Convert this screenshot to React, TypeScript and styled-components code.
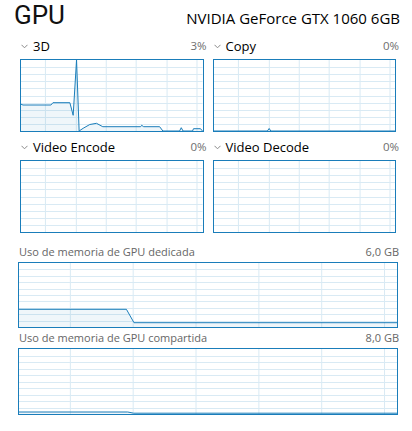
import React from "react";
import styled, { createGlobalStyle } from "styled-components";

const Global = createGlobalStyle`
  html, body { margin: 0; padding: 0; background: #ffffff; }
  body { font-family: "Open Sans", "Noto Sans", sans-serif; color: #000; }
`;

const BLUE = "#1a7dba";
const GRID = "#d9eaf4";
const FILL = "rgba(26,125,186,0.07)";

const Page = styled.div`
  width: 412px;
  height: 431px;
  box-sizing: border-box;
  display: flex;
  flex-direction: column;
  overflow: hidden;
`;

const Header = styled.div`
  display: flex;
  align-items: baseline;
  justify-content: space-between;
  padding: 0 12px 0 14px;
  height: 26px;
`;

const Title = styled.div`
  font-family: Roboto, "Open Sans", sans-serif;
  font-size: 26px;
  line-height: 30px;
  font-weight: 400;
  color: #111;
`;

const Device = styled.div`
  font-size: 15px;
  line-height: 26px;
`;

const SmallGrid = styled.div`
  display: grid;
  grid-template-columns: 1fr 1fr;
  column-gap: 6px;
  row-gap: 6px;
  padding: 0 13px 0 20px;
  margin-top: 11px;
`;

const Panel = styled.div`
  display: flex;
  flex-direction: column;
`;

const PanelHead = styled.div`
  display: flex;
  align-items: center;
  height: 18px;
  margin-bottom: 4px;
`;

const Chevron = styled.svg`
  width: 7px;
  height: 5px;
  margin: 0 5px 0 1px;
  flex: none;
`;

const PanelLabel = styled.span`
  font-size: 13px;
  line-height: 18px;
  flex: 1;
`;

const Percent = styled.span`
  font-size: 11.5px;
  line-height: 18px;
  color: #6e6e6e;
`;

const Frame = styled.div<{ $h: number; $inset: number }>`
  box-sizing: border-box;
  height: ${(p) => p.$h}px;
  margin-right: ${(p) => p.$inset}px;
  border: 1px solid ${BLUE};
  position: relative;
  & > svg { display: block; width: 100%; height: 100%; }
`;

const MemSection = styled.div`
  display: flex;
  flex-direction: column;
  padding: 0 13px 0 18px;
`;

const MemHead = styled.div<{ $top: number }>`
  display: flex;
  justify-content: space-between;
  align-items: baseline;
  height: 16px;
  margin-top: ${(p) => p.$top}px;
  margin-bottom: 2px;
  padding-left: 1px;
  font-size: 11px;
  line-height: 16px;
  color: #666666;
`;

type Pt = [number, number];

function Chart({
  w,
  h,
  cols,
  data,
  fill = true,
}: {
  w: number;
  h: number;
  cols: number;
  data?: Pt[];
  fill?: boolean;
}) {
  const iw = w - 2;
  const ih = h - 2;
  const sp = iw / cols;
  const off = sp * 0.8;
  const vlines: number[] = [];
  for (let x = off; x < iw; x += sp) vlines.push(Math.round(x) + 0.5);
  const hlines: number[] = [];
  for (let k = 1; k < 10; k++) hlines.push(Math.round((k * ih) / 10) + 0.5);
  const line = data ? data.map((p, i) => `${i ? "L" : "M"}${p[0]},${p[1]}`).join(" ") : "";
  const area = data ? `${line} L${data[data.length - 1][0]},${ih} L${data[0][0]},${ih} Z` : "";
  return (
    <svg viewBox={`0 0 ${iw} ${ih}`} preserveAspectRatio="none">
      {vlines.map((x) => (
        <line key={"v" + x} x1={x} x2={x} y1={0} y2={ih} stroke={GRID} strokeWidth={1} />
      ))}
      {hlines.map((y) => (
        <line key={"h" + y} x1={0} x2={iw} y1={y} y2={y} stroke={GRID} strokeWidth={1} />
      ))}
      {data && fill && <path d={area} fill={FILL} stroke="none" />}
      {data && <path d={line} fill="none" stroke={BLUE} strokeWidth={1} strokeLinejoin="round" />}
    </svg>
  );
}

const chev = (
  <Chevron viewBox="0 0 7 5">
    <path d="M0.5,0.8 L3.5,3.8 L6.5,0.8" fill="none" stroke="#8a8a8a" strokeWidth={1} />
  </Chevron>
);

const d3: Pt[] = [
  [0, 44.2], [2, 45], [30, 45], [32, 42.7], [49, 42.7], [52.3, 55.3], [55.7, 0],
  [58.3, 71], [62.3, 68.3], [69, 64.5], [75.7, 63.3], [82, 66.7], [120, 66.7], [121, 65.3],
  [123, 66.7], [139, 66.7], [142.3, 71], [159, 71], [160.7, 67.7], [162.5, 71], [172, 71],
  [173, 68.7], [180, 68.7], [182, 71],
];

const dCopy: Pt[] = [
  [0, 71], [53.5, 71], [55.3, 68.5], [57, 71], [183, 71],
];

const dDed: Pt[] = [
  [0, 46.3], [107.7, 46.3], [115.3, 59.7], [379, 59.7],
];

const dShared: Pt[] = [
  [0, 63], [109, 63], [115, 64.2], [379, 64.2],
];

function SmallPanel({ label, pct, data }: { label: string; pct: string; data?: Pt[] }) {
  return (
    <Panel>
      <PanelHead>
        {chev}
        <PanelLabel>{label}</PanelLabel>
        <Percent>{pct}</Percent>
      </PanelHead>
      <Frame $h={73} $inset={3}>
        <Chart w={184} h={73} cols={6} data={data} />
      </Frame>
    </Panel>
  );
}

export default function App() {
  return (
    <>
      <Global />
      <Page>
        <Header>
          <Title>GPU</Title>
          <Device>NVIDIA GeForce GTX 1060 6GB</Device>
        </Header>
        <SmallGrid>
          <SmallPanel label="3D" pct="3%" data={d3} />
          <SmallPanel label="Copy" pct="0%" data={dCopy} />
          <SmallPanel label="Video Encode" pct="0%" />
          <SmallPanel label="Video Decode" pct="0%" />
        </SmallGrid>
        <MemSection>
          <MemHead $top={11}>
            <span>Uso de memoria de GPU dedicada</span>
            <span>6,0 GB</span>
          </MemHead>
          <Frame $h={66} $inset={1}>
            <Chart w={381} h={66} cols={6} data={dDed} />
          </Frame>
          <MemHead $top={2}>
            <span>Uso de memoria de GPU compartida</span>
            <span>8,0 GB</span>
          </MemHead>
          <Frame $h={67} $inset={1}>
            <Chart w={381} h={67} cols={6} data={dShared} />
          </Frame>
        </MemSection>
      </Page>
    </>
  );
}
